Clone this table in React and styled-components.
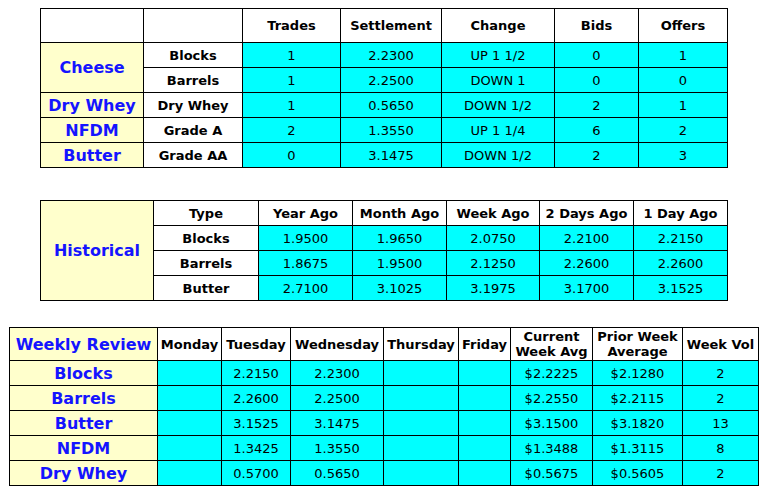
import React from 'react';
import styled, { createGlobalStyle } from 'styled-components';

const GlobalStyle = createGlobalStyle`
  body {
    margin: 0;
    background: #ffffff;
    font-family: Verdana, "DejaVu Sans", sans-serif;
    color: #000000;
  }
`;

const Page = styled.div`
  display: flex;
  flex-direction: column;
  align-items: flex-start;
  padding-top: 8px;
`;

const Table = styled.table`
  border-collapse: collapse;
  table-layout: fixed;
  border: 1px solid #000000;
  margin-left: ${p => p.$left}px;
  margin-bottom: ${p => p.$gap || 0}px;
`;

const Row = styled.tr`
  height: ${p => p.$h || 25}px;
`;

const HeadCell = styled.th`
  border: 1px solid #000000;
  background: #ffffff;
  padding: 0;
  font-size: 13px;
  font-weight: bold;
  line-height: 15px;
  text-align: center;
  vertical-align: middle;
`;

const TypeCell = styled.td`
  border: 1px solid #000000;
  background: #ffffff;
  padding: 0;
  font-size: 13px;
  font-weight: bold;
  text-align: center;
`;

const DataCell = styled.td`
  border: 1px solid #000000;
  background: #00ffff;
  padding: 0;
  font-size: 13px;
  text-align: center;
`;

const LabelCell = styled.td`
  border: 1px solid #000000;
  background: #ffffcc;
  padding: 0;
  font-size: 16px;
  font-weight: bold;
  color: #1414ff;
  text-align: center;
`;

const Cols = ({ widths }) => (
  <colgroup>
    {widths.map((w, i) => <col key={i} style={{ width: w }} />)}
  </colgroup>
);

const sales = [
  { label: 'Cheese', span: 2, type: 'Blocks', vals: ['1', '2.2300', 'UP 1 1/2', '0', '1'] },
  { type: 'Barrels', vals: ['1', '2.2500', 'DOWN 1', '0', '0'] },
  { label: 'Dry Whey', span: 1, type: 'Dry Whey', vals: ['1', '0.5650', 'DOWN 1/2', '2', '1'] },
  { label: 'NFDM', span: 1, type: 'Grade A', vals: ['2', '1.3550', 'UP 1 1/4', '6', '2'] },
  { label: 'Butter', span: 1, type: 'Grade AA', vals: ['0', '3.1475', 'DOWN 1/2', '2', '3'] },
];

const history = [
  { type: 'Blocks', vals: ['1.9500', '1.9650', '2.0750', '2.2100', '2.2150'] },
  { type: 'Barrels', vals: ['1.8675', '1.9500', '2.1250', '2.2600', '2.2600'] },
  { type: 'Butter', vals: ['2.7100', '3.1025', '3.1975', '3.1700', '3.1525'] },
];

const weekly = [
  { name: 'Blocks', vals: ['', '2.2150', '2.2300', '', '', '$2.2225', '$2.1280', '2'] },
  { name: 'Barrels', vals: ['', '2.2600', '2.2500', '', '', '$2.2550', '$2.2115', '2'] },
  { name: 'Butter', vals: ['', '3.1525', '3.1475', '', '', '$3.1500', '$3.1820', '13'] },
  { name: 'NFDM', vals: ['', '1.3425', '1.3550', '', '', '$1.3488', '$1.3115', '8'] },
  { name: 'Dry Whey', vals: ['', '0.5700', '0.5650', '', '', '$0.5675', '$0.5605', '2'] },
];

const App = () => (
  <Page>
    <GlobalStyle />

    <Table $left={40} $gap={32}>
      <Cols widths={[103, 99, 98, 101, 113, 84, 89]} />
      <tbody>
        <Row $h={34}>
          <HeadCell />
          <HeadCell />
          <HeadCell>Trades</HeadCell>
          <HeadCell>Settlement</HeadCell>
          <HeadCell>Change</HeadCell>
          <HeadCell>Bids</HeadCell>
          <HeadCell>Offers</HeadCell>
        </Row>
        {sales.map(r => (
          <Row key={r.type}>
            {r.label && <LabelCell rowSpan={r.span}>{r.label}</LabelCell>}
            <TypeCell>{r.type}</TypeCell>
            {r.vals.map((v, i) => <DataCell key={i}>{v}</DataCell>)}
          </Row>
        ))}
      </tbody>
    </Table>

    <Table $left={40} $gap={26}>
      <Cols widths={[113, 105, 94, 94, 93, 94, 94]} />
      <tbody>
        <Row>
          <LabelCell rowSpan={4}>Historical</LabelCell>
          <HeadCell>Type</HeadCell>
          <HeadCell>Year Ago</HeadCell>
          <HeadCell>Month Ago</HeadCell>
          <HeadCell>Week Ago</HeadCell>
          <HeadCell>2 Days Ago</HeadCell>
          <HeadCell>1 Day Ago</HeadCell>
        </Row>
        {history.map(r => (
          <Row key={r.type}>
            <TypeCell>{r.type}</TypeCell>
            {r.vals.map((v, i) => <DataCell key={i}>{v}</DataCell>)}
          </Row>
        ))}
      </tbody>
    </Table>

    <Table $left={9}>
      <Cols widths={[148, 64, 69, 93, 75, 52, 82, 90, 76]} />
      <tbody>
        <Row $h={33}>
          <LabelCell>Weekly Review</LabelCell>
          <HeadCell>Monday</HeadCell>
          <HeadCell>Tuesday</HeadCell>
          <HeadCell>Wednesday</HeadCell>
          <HeadCell>Thursday</HeadCell>
          <HeadCell>Friday</HeadCell>
          <HeadCell>Current<br />Week Avg</HeadCell>
          <HeadCell>Prior Week<br />Average</HeadCell>
          <HeadCell>Week Vol</HeadCell>
        </Row>
        {weekly.map(r => (
          <Row key={r.name}>
            <LabelCell>{r.name}</LabelCell>
            {r.vals.map((v, i) => <DataCell key={i}>{v}</DataCell>)}
          </Row>
        ))}
      </tbody>
    </Table>
  </Page>
);

export default App;
